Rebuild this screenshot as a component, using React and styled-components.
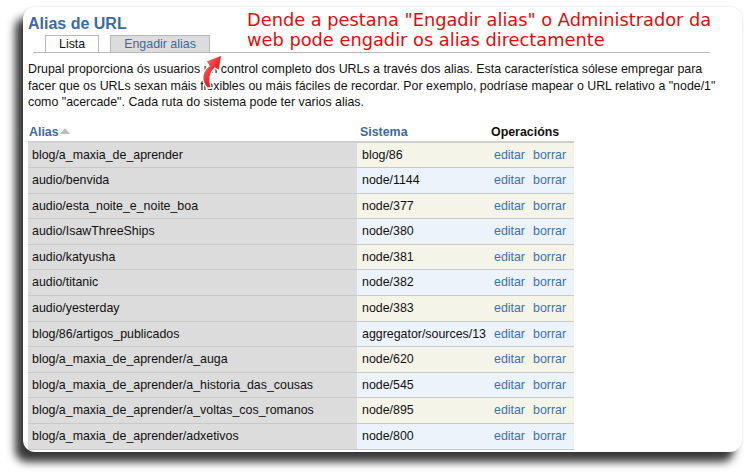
import React from "react";
import styled, { createGlobalStyle } from "styled-components";

const Global = createGlobalStyle`
  body {
    margin: 0;
    background: #fff;
    font-family: "Liberation Sans", Arial, sans-serif;
  }
`;

const Page = styled.div`
  width: 750px;
  height: 475px;
  padding: 7px 0 0 23px;
  box-sizing: border-box;
`;

const Card = styled.div`
  position: relative;
  width: 719px;
  height: 445px;
  box-sizing: border-box;
  padding: 7px 12px 0 5px;
  background: #fff;
  border-radius: 12px;
  overflow: hidden;
  box-shadow: -8px 10px 9px rgba(0, 0, 0, 0.78), 0 0 3px rgba(0, 0, 0, 0.12);
`;

const Title = styled.h2`
  margin: 0 0 1px 0;
  font-size: 16px;
  line-height: 20px;
  font-weight: bold;
  color: #3a6aa4;
`;

const Tabs = styled.ul`
  display: flex;
  gap: 11px;
  margin: 0 20px 0 5px;
  padding: 0 0 0 12px;
  list-style: none;
  border-bottom: 1px solid #b8b8b8;
`;

const Tab = styled.li`
  padding: 1px 13px 0;
  height: 15px;
  line-height: 15px;
  font-size: 12.4px;
  border: 1px solid #b8b8b8;
  border-bottom: none;
  margin-bottom: ${(p) => (p.$active ? "-1px" : "0")};
  background: ${(p) => (p.$active ? "#fff" : "#dcdcdc")};
  color: ${(p) => (p.$active ? "#111" : "#3a6aa4")};
`;

const Note = styled.div`
  position: absolute;
  left: 224px;
  top: 3px;
  font-family: "DejaVu Sans", sans-serif;
  font-size: 17.8px;
  line-height: 20px;
  color: #e8080a;
`;

const Arrow = styled.svg`
  position: absolute;
  left: 174px;
  top: 40px;
`;

const Intro = styled.p`
  margin: 8px 0 0 0;
  font-size: 12.4px;
  line-height: 16.5px;
  color: #111;
`;

const Table = styled.table`
  margin-top: 12px;
  border-collapse: collapse;
  table-layout: fixed;
  width: 546px;
  font-size: 12.4px;
`;

const Th = styled.th`
  text-align: left;
  font-weight: bold;
  padding: 1px 4px 1px ${(p) => p.$pl || "1px"};
  line-height: 16px;
  border-bottom: 2px solid #cfcfcf;
  color: ${(p) => (p.$plain ? "#111" : "#3a6aa4")};
`;

const Sort = styled.span`
  display: inline-block;
  width: 0;
  height: 0;
  margin-left: 1px;
  border-left: 5px solid transparent;
  border-right: 5px solid transparent;
  border-bottom: 6px solid #bdbdbd;
  vertical-align: 2px;
`;

const Row = styled.tr`
  border-bottom: 1px solid #c9c9c9;
  background: ${(p) => (p.$odd ? "#f5f4e9" : "#edf3fb")};
`;

const Td = styled.td`
  padding: 4px 4px 4px 5px;
  line-height: 16.6px;
  color: #111;
  white-space: nowrap;
`;

const AliasTd = styled(Td)`
  background: #dcdcdc;
  padding-left: 4px;
`;

const OpsTd = styled(Td)`
  padding-left: 6px;
`;

const Link = styled.a`
  color: #3a72b0;
  text-decoration: none;
  margin-right: 8px;
`;

const rows = [
  ["blog/a_maxia_de_aprender", "blog/86"],
  ["audio/benvida", "node/1144"],
  ["audio/esta_noite_e_noite_boa", "node/377"],
  ["audio/IsawThreeShips", "node/380"],
  ["audio/katyusha", "node/381"],
  ["audio/titanic", "node/382"],
  ["audio/yesterday", "node/383"],
  ["blog/86/artigos_publicados", "aggregator/sources/13"],
  ["blog/a_maxia_de_aprender/a_auga", "node/620"],
  ["blog/a_maxia_de_aprender/a_historia_das_cousas", "node/545"],
  ["blog/a_maxia_de_aprender/a_voltas_cos_romanos", "node/895"],
  ["blog/a_maxia_de_aprender/adxetivos", "node/800"],
];

export default function App() {
  return (
    <Page>
      <Global />
      <Card>
        <Title>Alias de URL</Title>
        <Tabs>
          <Tab $active>Lista</Tab>
          <Tab>Engadir alias</Tab>
        </Tabs>
        <Intro>
          Drupal proporciona ós usuarios un control completo dos URLs a través dos alias. Esta
          característica sólese empregar para facer que os URLs sexan máis flexibles ou máis
          fáciles de recordar. Por exemplo, podríase mapear o URL relativo a "node/1" como
          "acercade". Cada ruta do sistema pode ter varios alias.
        </Intro>
        <Table>
          <colgroup>
            <col style={{ width: 329 }} />
            <col style={{ width: 131 }} />
            <col style={{ width: 86 }} />
          </colgroup>
          <thead>
            <tr>
              <Th>
                Alias
                <Sort />
              </Th>
              <Th $pl="3px">Sistema</Th>
              <Th $pl="3px" $plain>
                Operacións
              </Th>
            </tr>
          </thead>
          <tbody>
            {rows.map(([alias, sys], i) => (
              <Row key={alias} $odd={i % 2 === 0}>
                <AliasTd>{alias}</AliasTd>
                <Td>{sys}</Td>
                <OpsTd>
                  <Link>editar</Link>
                  <Link>borrar</Link>
                </OpsTd>
              </Row>
            ))}
          </tbody>
        </Table>
        <Note>
          Dende a pestana "Engadir alias" o Administrador da
          <br />
          web pode engadir os alias directamente
        </Note>
        <Arrow width="30" height="44" viewBox="0 0 30 44">
          <defs>
            <linearGradient id="ar" x1="0" y1="0" x2="1" y2="1">
              <stop offset="0" stopColor="#ff9090" />
              <stop offset="0.5" stopColor="#ec2c30" />
              <stop offset="1" stopColor="#c40e14" />
            </linearGradient>
          </defs>
          <path
            d="M10 41 C4 34 4 25 12 19 L9 14 L25 8 L22 24 L18 21 C13 25 12 33 14 41 Z"
            fill="url(#ar)"
            stroke="#fff"
            strokeWidth="1.3"
            strokeLinejoin="round"
          />
        </Arrow>
      </Card>
    </Page>
  );
}
